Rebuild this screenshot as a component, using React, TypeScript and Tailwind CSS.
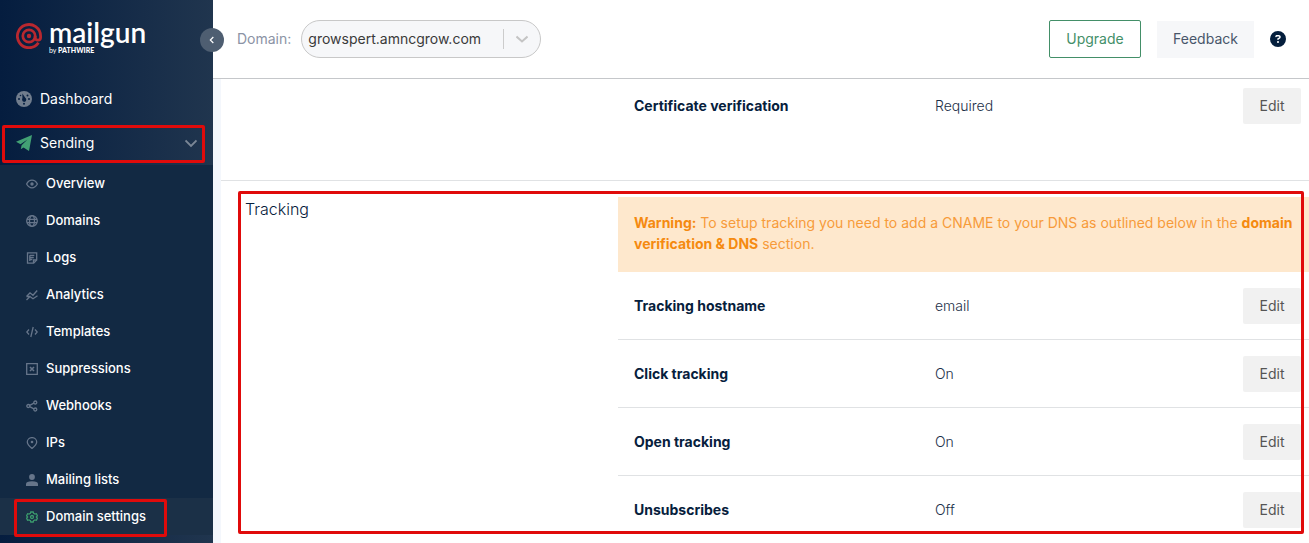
import React from "react";
import type { ReactNode } from "react";
import { FaCircleQuestion } from "react-icons/fa6";

function Line({ children, className = "size-3" }: { children: ReactNode; className?: string }) {
  return (
    <svg viewBox="0 0 12 12" fill="none" stroke="currentColor" strokeWidth="1.3" className={className} aria-hidden="true">
      {children}
    </svg>
  );
}

const items: { label: string; icon: ReactNode; active?: boolean }[] = [
  { label: "Overview", icon: <Line><path d="M.6 6C2 3.400 3.800 2.200 6 2.200S10 3.400 11.400 6C10 8.600 8.200 9.800 6 9.800S2 8.600.6 6Z" /><circle cx="6" cy="6" r="1.700" fill="currentColor" stroke="none" /></Line> },
  { label: "Domains", icon: <Line><circle cx="6" cy="6" r="5.300" /><ellipse cx="6" cy="6" rx="2.500" ry="5.300" /><path d="M1 4.300h10M1 7.700h10" /></Line> },
  { label: "Logs", icon: <Line><path d="M1.500.8h9.200V8l-3 3.200H1.500V.8Z" /><path d="M10.500 8h-3v3M3.800 3.300h4.500M3.800 3.300V9M3.800 5.500h4M3.800 7.500h2.500" /></Line> },
  { label: "Analytics", icon: <Line><path d="M.5 7.500 4 3.800l3 2.500L11.200 1.500M.5 11l3.500-3.500 3 2.300 4.500-3M.5 7.500h4" /></Line> },
  { label: "Templates", icon: <Line><path d="M3 3.500.8 6 3 8.500M9 3.500 11.200 6 9 8.500M7.200 1 4.800 11" /></Line> },
  { label: "Suppressions", icon: <Line><path d="M.7.7h10.600v10.600H.7Z" /><path d="m4 4 4 4M8 4 4 8" strokeWidth="1.600" /></Line> },
  { label: "Webhooks", icon: <Line><circle cx="2.300" cy="6" r="1.500" /><circle cx="9.300" cy="2.500" r="1.500" /><circle cx="9.300" cy="9.500" r="1.500" /><path d="m3.700 5.300 4.200-2.100M3.700 6.700l4.200 2.100" /></Line> },
  { label: "IPs", icon: <Line><path d="M6 11.400C3 9 1.300 7 1.300 5a4.700 4.400 0 0 1 9.400 0c0 2-1.700 4-4.700 6.400Z" /><circle cx="6" cy="5" r="1.300" fill="currentColor" stroke="none" /></Line> },
  { label: "Mailing lists", icon: <Line><g fill="currentColor" stroke="none"><circle cx="6" cy="3" r="2.900" /><path d="M0 12v-2c0-2 2-2.800 6-2.800s6 .8 6 2.800v2Z" /></g></Line> },
  { label: "Domain settings", active: true, icon: <Line><path d="M4.800 1h2.400l.4 1.400 1.400.7 1.400-.4 1 2-1 1.300 1 1.300-1 2-1.400-.4-1.400.7-.4 1.400H4.800l-.4-1.400L3 8.900l-1.400.4-1-2L1.600 6l-1-1.300 1-2 1.400.4 1.400-.7Z" /><circle cx="6" cy="6" r="1.500" /></Line> },
];

function GaugeIcon() {
  return (
    <svg viewBox="0 0 16 16" className="size-4 text-[#717d8d]" aria-hidden="true">
      <circle cx="8" cy="8" r="8" fill="currentColor" />
      <g fill="#082142">
        <circle cx="3" cy="8" r="1" />
        <circle cx="13" cy="8" r="1" />
        <circle cx="11.500" cy="4.500" r="1" />
        <circle cx="4.500" cy="4.500" r=".8" />
        <circle cx="8" cy="12.800" r="1" />
        <circle cx="8.200" cy="8.800" r="2.100" />
        <path d="M6.300 2.600 9.800 7.500 6.500 8.800Z" />
      </g>
    </svg>
  );
}

function PlaneIcon() {
  return (
    <svg viewBox="0 0 16 16" className="size-4 text-[#42a174]" fill="currentColor" aria-hidden="true">
      <path d="M16 0 0 6.800l4.500 2.400L11.500 4.500 5.600 10.200 4.800 14.200l2.700-1.600L13 16Z" />
    </svg>
  );
}

function Logo() {
  return (
    <a href="#" aria-label="mailgun by Pathwire" className="flex items-start gap-[7px] text-white">
      <svg viewBox="0 0 26 26" fill="none" stroke="#b9282f" className="mt-1 size-[26px]" aria-hidden="true">
        <path d="M22.500 19.800A11.600 11.600 0 1 1 24.600 13v1.500a2.700 2.700 0 0 1-5.400 0V13" strokeWidth="2.800" />
        <circle cx="13" cy="13" r="6.200" strokeWidth="2.700" />
        <circle cx="13" cy="13" r="2.200" fill="#b9282f" stroke="none" />
      </svg>
      <span className="flex flex-col font-['Lato',sans-serif]">
        <span className="text-[28px] leading-[27px] font-semibold">mailgun</span>
        <span className="whitespace-nowrap text-[7px] leading-[9px]">
          by <b className="font-black">PATHWIRE</b>
        </span>
      </span>
    </a>
  );
}

function Sidebar() {
  return (
    <aside className="flex w-[213px] shrink-0 flex-col bg-linear-to-r from-[#051d3f] to-[#20354e] text-white">
      <div className="h-[77px] px-4 pt-[19px]">
        <Logo />
      </div>
      <nav className="text-sm">
        <a href="#" className="flex h-11 items-center gap-2 px-4">
          <GaugeIcon />
          Dashboard
        </a>
        <div className="relative">
          <a href="#" className="flex h-11 items-center gap-2 px-4">
            <PlaneIcon />
            <span className="flex-1">Sending</span>
            <Line className="size-3 text-[#7b8796]"><path d="m.5 3.500 5.500 5.500 5.500-5.500" strokeWidth="1.800" /></Line>
          </a>
          <div className="pointer-events-none absolute top-1 right-2 left-0.5 h-[38px] rounded-xs border-3 border-[#e00b0b]" />
        </div>
        <ul className="bg-[#122943] text-[13px] font-medium">
          {items.map((item) => (
            <li key={item.label} className={item.active ? "relative bg-[#1b3047]" : ""}>
              <a href="#" className="flex h-[37px] items-center gap-2 pl-[26px]">
                <span className={item.active ? "text-[#3b9a6d]" : "text-[#66758a]"}>{item.icon}</span>
                {item.label}
              </a>
              {item.active && (
                <div className="pointer-events-none absolute top-px left-3.5 h-[38px] w-[153px] rounded-xs border-3 border-[#e00b0b]" />
              )}
            </li>
          ))}
        </ul>
      </nav>
    </aside>
  );
}

function Header() {
  return (
    <header className="relative flex h-[79px] shrink-0 items-center border-b border-[#c5c7ca] bg-white pl-6 text-sm">
      <button type="button" aria-label="Collapse menu" className="absolute top-7 -left-[13px] flex size-6 items-center justify-center rounded-full bg-[#4e5e71] text-white">
        <Line className="size-2"><path d="M8 1.500 3.500 6 8 10.500" strokeWidth="1.800" /></Line>
      </button>
      <label htmlFor="domain" className="mr-2.5 text-[#8b93a5]">Domain:</label>
      <div className="relative">
        <select id="domain" className="h-[38px] w-60 appearance-none rounded-full border border-[#c8c8c8] bg-[#f6f7f9] pl-1.5 text-[#3a3a3a]">
          <option>growspert.amncgrow.com</option>
        </select>
        <div className="pointer-events-none absolute inset-y-2 right-[13px] flex items-center gap-3 text-[#c4c4c4]">
          <span className="h-5 w-px bg-[#ccc]" />
          <Line className="size-3"><path d="m.5 3.500 5.500 5 5.500-5" strokeWidth="2" /></Line>
        </div>
      </div>
      <div className="ml-auto flex items-center gap-4 pr-[23px]">
        <button type="button" className="h-[38px] w-[92px] rounded-xs border border-[#438f68] text-[#438f68]">Upgrade</button>
        <button type="button" className="h-[37px] w-[97px] bg-[#f6f7f9] text-[#48566a]">Feedback</button>
        <button type="button" aria-label="Help"><FaCircleQuestion className="size-4 text-[#041e3c]" /></button>
      </div>
    </header>
  );
}

function Row({ label, value, className = "" }: { label: string; value: string; className?: string }) {
  return (
    <div className={`flex items-center pr-2 pl-4 ${className}`}>
      <div className="w-[301px] font-bold text-[#06203c]">{label}</div>
      <div className="flex-1 font-light text-[#1c3048]">{value}</div>
      <button type="button" aria-label={`Edit ${label}`} className="h-9 w-[58px] rounded-xs bg-[#f1f1f1] text-[#555]">Edit</button>
    </div>
  );
}

export default function App() {
  return (
    <div className="flex h-screen overflow-hidden bg-white font-['Inter',sans-serif]">
      <Sidebar />
      <div className="flex min-w-0 flex-1 flex-col">
        <Header />
        <main className="min-h-0 flex-1 overflow-hidden border-l-8 border-[#f4f7fc] text-sm">
          <section className="border-b border-[#e0e2e4] pt-[9px] pb-14 pl-[397px]">
            <Row label="Certificate verification" value="Required" />
          </section>
          <section className="relative flex pt-4">
            <h2 className="w-[397px] shrink-0 pl-6 text-base font-light text-[#06203c]">Tracking</h2>
            <div className="flex-1">
              <p className="bg-[#fee8cd] pt-[15px] pr-3 pb-[18px] pl-4 leading-[21px] text-[#f79b3a]">
                <b className="font-bold text-[#f58a10]">Warning:</b> To setup tracking you need to add a CNAME to your DNS as outlined below in the{" "}
                <b className="font-bold text-[#f58a10]">domain verification &amp; DNS</b> section.
              </p>
              <div className="divide-y divide-[#e0e2e4]">
                <Row className="h-[68px]" label="Tracking hostname" value="email" />
                <Row className="h-[68px]" label="Click tracking" value="On" />
                <Row className="h-[68px]" label="Open tracking" value="On" />
                <Row className="h-[68px]" label="Unsubscribes" value="Off" />
              </div>
            </div>
            <div className="pointer-events-none absolute top-2.5 right-[5px] bottom-2.5 left-[17px] rounded-xs border-3 border-[#e00b0b]" />
          </section>
        </main>
      </div>
    </div>
  );
}
